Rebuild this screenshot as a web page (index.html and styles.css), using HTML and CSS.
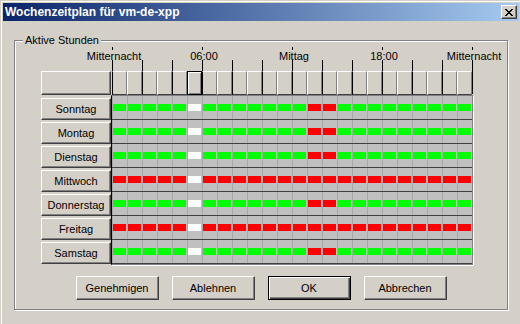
FILE: index.html
```html
<!DOCTYPE html>
<html lang="de">
<head>
<meta charset="utf-8">
<title>Wochenzeitplan</title>
<link rel="stylesheet" href="styles.css">
</head>
<body>
<div class="window">
  <div class="titlebar">
    <span class="title">Wochenzeitplan für vm-de-xpp</span>
    <button class="close" aria-label="Schließen">
      <svg width="8" height="7" viewBox="0 0 8 7" shape-rendering="crispEdges"><path d="M0 0h2v1h1v1h2V1h1V0h2v1H7v1H6v1H5v1h1v1h1v1h1v1H6V6H5V5H3v1H2v1H0V6h1V5h1V4h1V3H2V2H1V1H0z" fill="#000"/></svg>
    </button>
  </div>
  <div class="group">
    <span class="legend">Aktive Stunden</span>
    <div class="sched">
      <div class="marks"><span></span><span></span><span></span><span class="last"></span></div>
      <div class="labels"><span>Mitternacht</span><span>06:00</span><span>Mittag</span><span>18:00</span><span>Mitternacht</span></div>
      <div class="ticks"><span></span><span></span><span></span><span></span><span></span><span></span><span></span><span></span><span></span><span></span><span></span><span class="last"></span></div>
      <div class="head" id="head"><button class="btn corner"></button></div>
      <div class="rows">
        <div class="days">
          <button class="btn day">Sonntag</button>
          <button class="btn day">Montag</button>
          <button class="btn day">Dienstag</button>
          <button class="btn day">Mittwoch</button>
          <button class="btn day">Donnerstag</button>
          <button class="btn day">Freitag</button>
          <button class="btn day">Samstag</button>
        </div>
        <div class="grid" id="grid"></div>
      </div>
    </div>
    <div class="actions">
      <button class="btn act">Genehmigen</button>
      <button class="btn act">Ablehnen</button>
      <button class="btn act def">OK</button>
      <button class="btn act">Abbrechen</button>
    </div>
  </div>
</div>
<script src="app.js"></script>
</body>
</html>
```
FILE: styles.css
```css
html, body {
  margin: 0;
  padding: 0;
  background: #d4d0c8;
  overflow: hidden;
}
body {
  font-family: "Liberation Sans", Arial, sans-serif;
  font-size: 11px;
  color: #000;
}
.window {
  width: 522px;
  height: 326px;
  box-sizing: border-box;
  background: #d4d0c8;
  border: 1px solid;
  border-color: #d4d0c8 #404040 #404040 #d4d0c8;
  box-shadow: inset 1px 1px #fff, inset -1px -1px #808080;
  padding: 2px;
}
.titlebar {
  height: 18px;
  display: flex;
  align-items: center;
  justify-content: space-between;
  padding: 0 2px;
  background: linear-gradient(to right, #0a246a, #a6caf0);
  color: #fff;
  font-weight: bold;
  font-size: 12px;
  line-height: 18px;
}
.title { white-space: nowrap; }
.close {
  width: 16px;
  height: 14px;
  box-sizing: border-box;
  padding: 0;
  margin: 0;
  background: #d4d0c8;
  border: 1px solid;
  border-color: #fff #404040 #404040 #fff;
  box-shadow: inset -1px -1px #808080;
  display: flex;
  align-items: center;
  justify-content: center;
}
.close svg { display: block; margin-left: -1px; }
.group {
  position: relative;
  margin: 19px 11px 0;
  width: 494px;
  box-sizing: border-box;
  border: 1px solid #808080;
  box-shadow: 1px 1px #fff, inset 1px 1px #fff;
  padding: 6px 0 9px;
}
.legend {
  position: absolute;
  top: -7px;
  left: 8px;
  padding: 0 2px;
  background: #d4d0c8;
  line-height: 13px;
  white-space: nowrap;
}
.sched { margin-left: 26px; }
.marks {
  display: flex;
  height: 3px;
  margin-left: 71px;
}
.marks span {
  width: 90px;
  box-sizing: border-box;
  border-left: 1px solid #000;
}
.marks span.last { width: 91px; border-right: 1px solid #000; }
.labels {
  display: flex;
  height: 13px;
  line-height: 13px;
  margin-left: 28px;
  position: relative;
  z-index: 1;
}
.labels span {
  flex: 0 0 90px;
  text-align: center;
  white-space: nowrap;
}
.ticks {
  display: flex;
  height: 11px;
  margin-top: -3px;
  margin-left: 71px;
}
.ticks span {
  width: 30px;
  box-sizing: border-box;
  border-left: 1px solid #000;
}
.ticks span.last { width: 31px; border-right: 1px solid #000; }
.btn {
  background: #d4d0c8;
  border: 1px solid;
  border-color: #fff #404040 #404040 #fff;
  box-shadow: inset -1px -1px #808080;
  font-family: "Liberation Sans", Arial, sans-serif;
  font-size: 11px;
  color: #000;
  padding: 0;
  margin: 0;
  box-sizing: border-box;
}
.head {
  display: flex;
  height: 24px;
}
.corner {
  width: 70px;
  height: 24px;
  margin-right: 1px;
}
.hc {
  width: 15px;
  height: 24px;
  box-sizing: border-box;
  border: 1px solid;
  border-color: #fff #808080 #404040 #fff;
}
.hc:nth-child(even) { border-left-color: #000; }
.hc.focus {
  border-color: #000;
  box-shadow: inset 1px 1px #fff, inset -1px -1px #808080;
}
.hend {
  width: 1px;
  height: 23px;
  background: #000;
}
.rows { display: flex; }
.days {
  width: 70px;
  display: flex;
  flex-direction: column;
  gap: 2px;
  padding-top: 3px;
}
.day { width: 70px; height: 22px; }
.grid {
  background: #c0c0c0;
  border: 1px solid #808080;
  border-left-color: #000;
  box-shadow: 1px 1px #fff;
}
.row {
  display: grid;
  grid-template-columns: repeat(24, 15px);
  height: 24px;
  box-sizing: border-box;
  border-bottom: 1px solid #404040;
}
.c { border-left: 1px solid #a8a8a8; }
.c i {
  display: block;
  width: 13px;
  height: 7px;
  margin-top: 8px;
}
.g i { background: #00ff00; }
.r i { background: #ff0000; }
.w i { background: #ffffff; }
.actions {
  display: flex;
  justify-content: center;
  gap: 13px;
  margin-top: 11px;
}
.act { width: 83px; height: 24px; }
.act.def {
  border-color: #000;
  box-shadow: inset 1px 1px #fff, inset -1px -1px #404040, inset -2px -2px #808080;
}
```
FILE: app.js
```js
(function () {
  var head = document.getElementById('head');
  for (var h = 0; h < 24; h++) {
    var d = document.createElement('div');
    d.className = 'hc' + (h === 5 ? ' focus' : '');
    head.appendChild(d);
  }
  var end = document.createElement('div');
  end.className = 'hend';
  head.appendChild(end);

  // g = green, r = red, w = white ; per day 24 hours
  var normal = 'gggggwgggggggrrggggggggg';
  var allRed = 'rrrrrwrrrrrrrrrrrrrrrrrr';
  var days = [normal, normal, normal, allRed, normal, allRed, normal];
  var grid = document.getElementById('grid');
  days.forEach(function (p) {
    var row = document.createElement('div');
    row.className = 'row';
    for (var i = 0; i < 24; i++) {
      var c = document.createElement('div');
      c.className = 'c ' + p[i];
      c.appendChild(document.createElement('i'));
      row.appendChild(c);
    }
    grid.appendChild(row);
  });
})();
```
